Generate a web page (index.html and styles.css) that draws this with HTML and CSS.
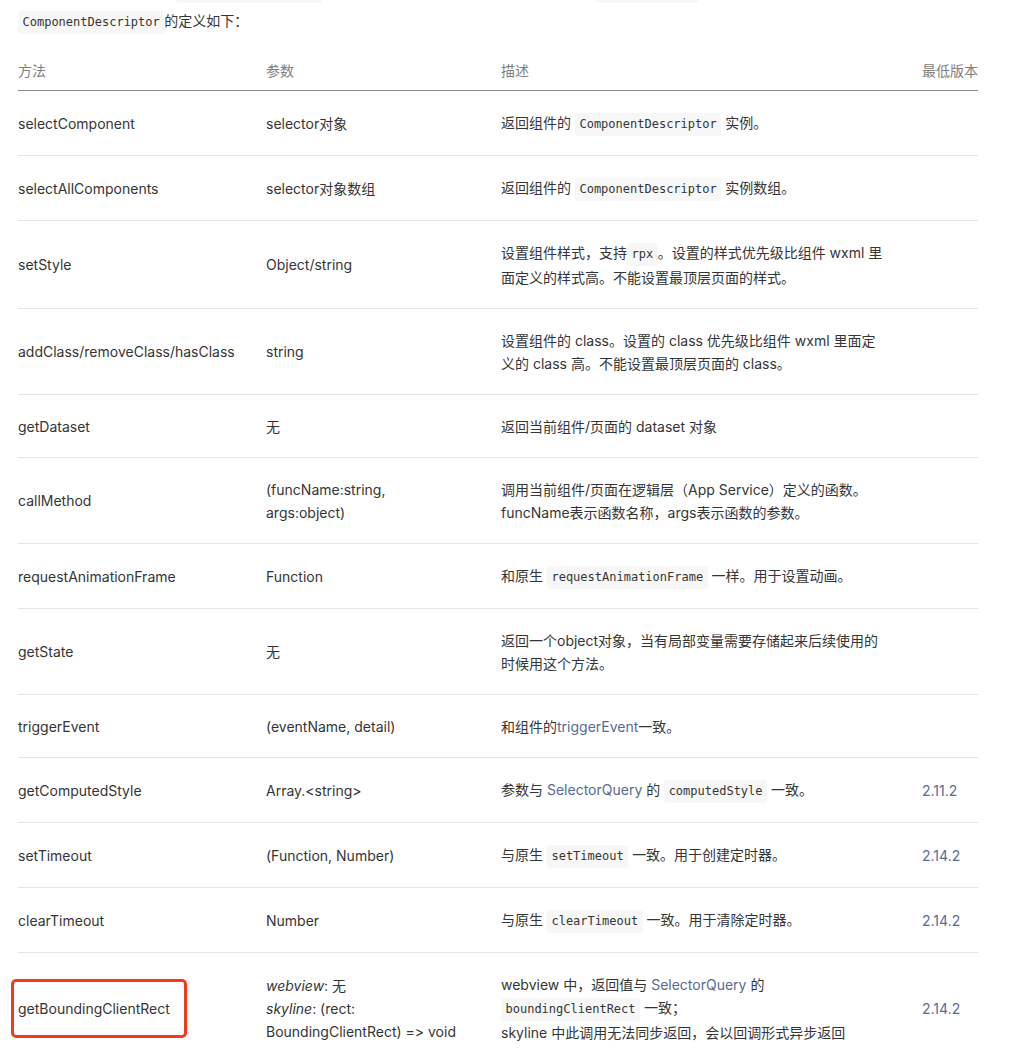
FILE: index.html
```html
<!DOCTYPE html>
<html lang="zh-CN">
<head>
    <meta charset="UTF-8">
    <meta name="viewport" content="width=device-width, initial-scale=1.0">
    <title>ComponentDescriptor</title>
    <link rel="stylesheet" href="styles.css">
</head>
<body>
    <main class="doc">
        <p class="lead prev">表示的是触发事件的组件 <code>ComponentDescriptor</code> 实例，如果触发事件的组件是在页面内的， <code>ownerInstance</code> 表示的是页面实例。</p>
        <p class="lead"><code>ComponentDescriptor</code>的定义如下：</p>

        <table class="api-table">
            <colgroup>
                <col class="col-method">
                <col class="col-param">
                <col class="col-desc">
                <col class="col-ver">
            </colgroup>
            <thead>
                <tr>
                    <th>方法</th>
                    <th>参数</th>
                    <th>描述</th>
                    <th>最低版本</th>
                </tr>
            </thead>
            <tbody>
                <tr>
                    <td>selectComponent</td>
                    <td>selector对象</td>
                    <td>返回组件的 <code>ComponentDescriptor</code> 实例。</td>
                    <td></td>
                </tr>
                <tr>
                    <td>selectAllComponents</td>
                    <td>selector对象数组</td>
                    <td>返回组件的 <code>ComponentDescriptor</code> 实例数组。</td>
                    <td></td>
                </tr>
                <tr>
                    <td>setStyle</td>
                    <td>Object/string</td>
                    <td>设置组件样式，支持<code>rpx</code>。设置的样式优先级比组件 wxml 里面定义的样式高。不能设置最顶层页面的样式。</td>
                    <td></td>
                </tr>
                <tr>
                    <td>addClass/removeClass/hasClass</td>
                    <td>string</td>
                    <td>设置组件的 class。设置的 class 优先级比组件 wxml 里面定义的 class 高。不能设置最顶层页面的 class。</td>
                    <td></td>
                </tr>
                <tr>
                    <td>getDataset</td>
                    <td>无</td>
                    <td>返回当前组件/页面的 dataset 对象</td>
                    <td></td>
                </tr>
                <tr>
                    <td>callMethod</td>
                    <td>(funcName:string, args:object)</td>
                    <td>调用当前组件/页面在逻辑层（App Service）定义的函数。funcName表示函数名称，args表示函数的参数。</td>
                    <td></td>
                </tr>
                <tr>
                    <td>requestAnimationFrame</td>
                    <td>Function</td>
                    <td>和原生 <code>requestAnimationFrame</code> 一样。用于设置动画。</td>
                    <td></td>
                </tr>
                <tr>
                    <td>getState</td>
                    <td>无</td>
                    <td>返回一个object对象，当有局部变量需要存储起来后续使用的时候用这个方法。</td>
                    <td></td>
                </tr>
                <tr>
                    <td>triggerEvent</td>
                    <td>(eventName, detail)</td>
                    <td>和组件的<a href="#">triggerEvent</a>一致。</td>
                    <td></td>
                </tr>
                <tr>
                    <td>getComputedStyle</td>
                    <td>Array.&lt;string&gt;</td>
                    <td>参数与 <a href="#">SelectorQuery</a> 的 <code>computedStyle</code> 一致。</td>
                    <td><a href="#">2.11.2</a></td>
                </tr>
                <tr>
                    <td>setTimeout</td>
                    <td>(Function, Number)</td>
                    <td>与原生 <code>setTimeout</code> 一致。用于创建定时器。</td>
                    <td><a href="#">2.14.2</a></td>
                </tr>
                <tr>
                    <td>clearTimeout</td>
                    <td>Number</td>
                    <td>与原生 <code>clearTimeout</code> 一致。用于清除定时器。</td>
                    <td><a href="#">2.14.2</a></td>
                </tr>
                <tr>
                    <td><span class="marked">getBoundingClientRect</span></td>
                    <td><em>webview</em>: 无<br><em>skyline</em>: (rect: BoundingClientRect) =&gt; void</td>
                    <td>webview 中，返回值与 <a href="#">SelectorQuery</a> 的 <code>boundingClientRect</code> 一致；<br>skyline 中此调用无法同步返回，会以回调形式异步返回</td>
                    <td><a href="#">2.14.2</a></td>
                </tr>
            </tbody>
        </table>
    </main>
</body>
</html>
```

FILE: styles.css
```css
* {
    box-sizing: border-box;
}

body {
    margin: 0;
    background: #fff;
    color: #353535;
    font-family: Inter, "Noto Sans CJK SC", sans-serif;
    font-size: 14px;
    line-height: 23px;
    font-variant-ligatures: none;
    font-feature-settings: "calt" 0;
}

.doc {
    padding: 0 44px 0 18px;
    margin-top: -22px;
}

.lead {
    margin: 0 0 6px;
    white-space: nowrap;
}

code {
    display: inline-block;
    padding: 4px 4.5px;
    line-height: 15px;
    font-family: "DejaVu Sans Mono", "Liberation Mono", monospace;
    font-size: 12px;
    color: #353535;
    background: #f7f7f7;
    border-radius: 3px;
}

a {
    color: #576b95;
    text-decoration: none;
}

/* 表格 */
.api-table {
    width: 960px;
    margin-top: 13px;
    border-collapse: collapse;
    table-layout: fixed;
}

.col-method { width: 248px; }
.col-param { width: 235px; }
.col-desc { width: 421px; }
.col-ver { width: 56px; }

.api-table th {
    padding: 12px 0 8px;
    font-weight: normal;
    text-align: left;
    color: #808080;
    border-bottom: 1px solid #8c8c8c;
}

.api-table td {
    padding: 19.5px 0;
    vertical-align: middle;
    border-bottom: 1px solid #e5e5e5;
}

.api-table td:nth-child(2) {
    padding-right: 45px;
}

.api-table td:nth-child(3) {
    padding-right: 37px;
}

.api-table th:last-child,
.api-table td:last-child {
    white-space: nowrap;
}

/* 红框标注 */
.marked {
    position: relative;
    display: inline-block;
}

.marked::after {
    content: "";
    position: absolute;
    top: -18px;
    bottom: -18px;
    left: -7px;
    right: -17px;
    border: 3px solid #f5391c;
    border-radius: 5px;
}
```
